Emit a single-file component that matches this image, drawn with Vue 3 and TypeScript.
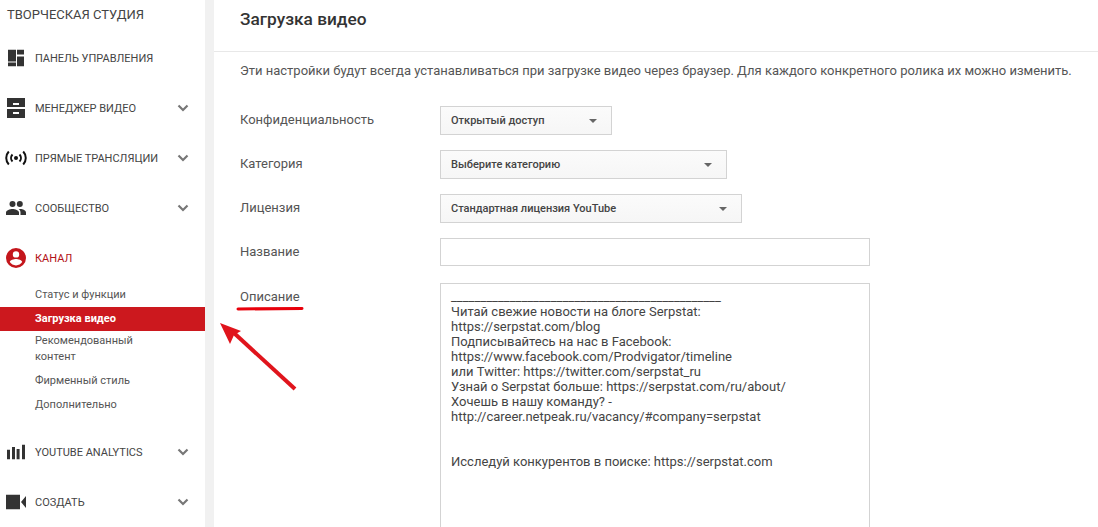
<script setup lang="ts">
const descriptionLines = [
  '______________________________________________',
  'Читай свежие новости на блоге Serpstat:',
  'https://serpstat.com/blog',
  'Подписывайтесь на нас в Facebook:',
  'https://www.facebook.com/Prodvigator/timeline',
  'или Twitter: https://twitter.com/serpstat_ru',
  'Узнай о Serpstat больше: https://serpstat.com/ru/about/',
  'Хочешь в нашу команду? -',
  'http://career.netpeak.ru/vacancy/#company=serpstat',
  '\u00a0',
  '\u00a0',
  'Исследуй конкурентов в поиске: https://serpstat.com',
]

const selects = [
  { label: 'Конфиденциальность', value: 'Открытый доступ', width: 172 },
  { label: 'Категория', value: 'Выберите категорию', width: 287 },
  { label: 'Лицензия', value: 'Стандартная лицензия YouTube', width: 302 },
]
</script>

<template>
  <div class="page">
    <aside class="sidebar">
      <div class="studio">ТВОРЧЕСКАЯ СТУДИЯ</div>

      <div class="nav-item">
        <svg class="nav-icon" width="16" height="17" viewBox="0 0 16 17">
          <path d="M0 0h8v12H0zM0 13h8v4H0zM9 0h7v5H9zM9 7h7v10H9z" fill="#333" />
        </svg>
        <span>ПАНЕЛЬ УПРАВЛЕНИЯ</span>
      </div>

      <div class="nav-item">
        <svg class="nav-icon" width="18" height="20" viewBox="0 0 18 20">
          <path fill-rule="evenodd" d="M0 0h18v9H0zM6 5v2h6V5zM0 11h18v9H0zM6 14v2h6v-2z" fill="#333" />
        </svg>
        <span>МЕНЕДЖЕР ВИДЕО</span>
        <svg class="chevron" width="12" height="8" viewBox="0 0 12 8"><path d="M1.500 1.500L6 6l4.500-4.500" fill="none" stroke="#777" stroke-width="2.200" /></svg>
      </div>

      <div class="nav-item">
        <svg class="nav-icon" width="22" height="15" viewBox="0 0 22 15">
          <circle cx="11" cy="7.500" r="2" fill="#111" />
          <path d="M7.500 4a5 5 0 0 0 0 7M14.500 4a5 5 0 0 1 0 7M3.800 1a9.500 9.500 0 0 0 0 13M18.200 1a9.500 9.500 0 0 1 0 13" fill="none" stroke="#111" stroke-width="2" />
        </svg>
        <span>ПРЯМЫЕ ТРАНСЛЯЦИИ</span>
        <svg class="chevron" width="12" height="8" viewBox="0 0 12 8"><path d="M1.500 1.500L6 6l4.500-4.500" fill="none" stroke="#777" stroke-width="2.200" /></svg>
      </div>

      <div class="nav-item">
        <svg class="nav-icon" width="20" height="14" viewBox="0 0 20 14">
          <circle cx="6.500" cy="3" r="3" fill="#333" />
          <circle cx="13.800" cy="3" r="3" fill="#333" />
          <path d="M0 14v-2.500C0 9.300 4 8 6.500 8S13 9.300 13 11.500V14zM14.500 14v-2.500c0-1.300-.6-2.500-1.800-3.400 3-.6 7.300.8 7.300 3.400V14z" fill="#333" />
        </svg>
        <span>СООБЩЕСТВО</span>
        <svg class="chevron" width="12" height="8" viewBox="0 0 12 8"><path d="M1.500 1.500L6 6l4.500-4.500" fill="none" stroke="#777" stroke-width="2.200" /></svg>
      </div>

      <div class="nav-item active">
        <svg class="nav-icon" width="20" height="20" viewBox="0 0 20 20">
          <path fill-rule="evenodd" d="M10 0a10 10 0 1 0 0 20 10 10 0 0 0 0-20zM10 3.200a3.200 3.200 0 1 1 0 6.400 3.200 3.200 0 0 1 0-6.400zM10 17.400c-2.600 0-4.900-1.300-6.200-3.300 0-2 4.100-3.200 6.200-3.200s6.200 1.200 6.200 3.200c-1.300 2-3.600 3.300-6.200 3.300z" fill="#c4161c" />
        </svg>
        <span>КАНАЛ</span>
      </div>

      <ul class="sub-nav">
        <li>Статус и функции</li>
        <li class="current">Загрузка видео</li>
        <li class="tall">Рекомендованный контент</li>
        <li>Фирменный стиль</li>
        <li>Дополнительно</li>
      </ul>

      <div class="nav-item">
        <svg class="nav-icon" width="18" height="15" viewBox="0 0 18 15">
          <path d="M0 5.300h3V15H0zM5 2.600h3V15H5zM9.600 4.600h3V15h-3zM15 0h3v15h-3z" fill="#333" />
        </svg>
        <span>YOUTUBE ANALYTICS</span>
        <svg class="chevron" width="12" height="8" viewBox="0 0 12 8"><path d="M1.500 1.500L6 6l4.500-4.500" fill="none" stroke="#777" stroke-width="2.200" /></svg>
      </div>

      <div class="nav-item">
        <svg class="nav-icon" width="20" height="15" viewBox="0 0 20 15">
          <path d="M0 0h14v15H0zM15 7.500L20 1.500v12z" fill="#333" />
        </svg>
        <span>СОЗДАТЬ</span>
        <svg class="chevron" width="12" height="8" viewBox="0 0 12 8"><path d="M1.500 1.500L6 6l4.500-4.500" fill="none" stroke="#777" stroke-width="2.200" /></svg>
      </div>
    </aside>

    <main class="content">
      <header class="head">
        <h1>Загрузка видео</h1>
      </header>

      <p class="hint">Эти настройки будут всегда устанавливаться при загрузке видео через браузер. Для каждого конкретного ролика их можно изменить.</p>

      <div class="form">
        <div v-for="item in selects" :key="item.label" class="row">
          <label>{{ item.label }}</label>
          <div class="select" :style="{ width: item.width + 'px' }">
            <span>{{ item.value }}</span>
            <i class="caret"></i>
          </div>
        </div>

        <div class="row">
          <label>Название</label>
          <div class="input"></div>
        </div>

        <div class="row top">
          <label>Описание</label>
          <div class="textarea">
            <div v-for="(line, i) in descriptionLines" :key="i">{{ line }}</div>
          </div>
        </div>
      </div>
    </main>

    <svg class="markup" width="1098" height="527" viewBox="0 0 1098 527">
      <path d="M238 309L302 308.500" fill="none" stroke="#e8000b" stroke-width="3" stroke-linecap="round" />
      <path d="M295 389L234 333" fill="none" stroke="#e0141c" stroke-width="4" />
      <path d="M220 323L241 331L234 335L230 344z" fill="#e0141c" />
    </svg>
  </div>
</template>

<style scoped>
.page {
  position: relative;
  display: flex;
  width: 1098px;
  height: 527px;
  overflow: hidden;
  background: #fff;
  font-family: Roboto, "Liberation Sans", sans-serif;
  color: #333;
}

.sidebar {
  flex: none;
  width: 205px;
  margin-right: 9px;
  box-shadow: 9px 0 0 #f1f1f1;
}

.studio {
  height: 33px;
  padding: 7px 0 0 7px;
  box-sizing: border-box;
  font-size: 13px;
  line-height: 15px;
  color: #444;
}

.nav-item {
  position: relative;
  display: flex;
  align-items: center;
  height: 50px;
  padding-left: 35px;
  font-size: 11px;
  color: #444;
}

.nav-icon {
  position: absolute;
  left: 16px;
  top: 50%;
  transform: translate(-50%, -50%);
}

.nav-item .chevron {
  position: absolute;
  left: 177px;
  top: 21px;
}

.nav-item.active {
  color: #b31217;
}

.sub-nav {
  list-style: none;
  margin: 0 0 10px;
  padding: 0;
  font-size: 11px;
  color: #555;
}

.sub-nav li {
  padding: 0 35px;
  line-height: 24px;
}

.sub-nav .current {
  background: #cc181e;
  color: #fff;
  font-weight: 700;
}

.sub-nav .tall {
  line-height: 16px;
  padding-top: 2px;
  padding-bottom: 4px;
  padding-right: 40px;
}

.content {
  flex: 1;
  min-width: 0;
}

.head {
  height: 52px;
  padding-left: 26px;
  border-bottom: 1px solid #e8e8e8;
  box-sizing: border-box;
}

.head h1 {
  margin: 0;
  padding-top: 8px;
  font-size: 17.300px;
  line-height: 22px;
  font-weight: 500;
  color: #333;
}

.hint {
  margin: 0;
  padding: 11px 0 0 26px;
  font-size: 13px;
  line-height: 16px;
  color: #555;
  white-space: nowrap;
}

.form {
  padding: 27px 0 0 26px;
  display: flex;
  flex-direction: column;
  gap: 15px;
}

.row {
  display: flex;
  align-items: center;
  min-height: 28px;
}

.row label {
  flex: none;
  width: 200px;
  margin-bottom: 2px;
  font-size: 13px;
  color: #555;
}

.row.top {
  align-items: flex-start;
  margin-top: 2px;
}

.row.top label {
  margin: 6px 0 0;
}

.select {
  display: flex;
  align-items: center;
  justify-content: space-between;
  height: 29px;
  box-sizing: border-box;
  padding: 0 14px 0 10px;
  border: 1px solid #d3d3d3;
  background: linear-gradient(#fbfbfb, #f6f6f6);
  font-size: 11px;
  font-weight: 500;
  color: #444;
}

.caret {
  width: 0;
  height: 0;
  border-left: 4px solid transparent;
  border-right: 4px solid transparent;
  border-top: 4px solid #666;
}

.input {
  width: 430px;
  height: 28px;
  box-sizing: border-box;
  border: 1px solid #d3d3d3;
}

.textarea {
  width: 430px;
  height: 300px;
  box-sizing: border-box;
  padding: 5px 10px;
  border: 1px solid #d3d3d3;
  font-size: 13px;
  line-height: 15px;
  color: #444;
  white-space: nowrap;
}

.markup {
  position: absolute;
  left: 0;
  top: 0;
  pointer-events: none;
}
</style>
